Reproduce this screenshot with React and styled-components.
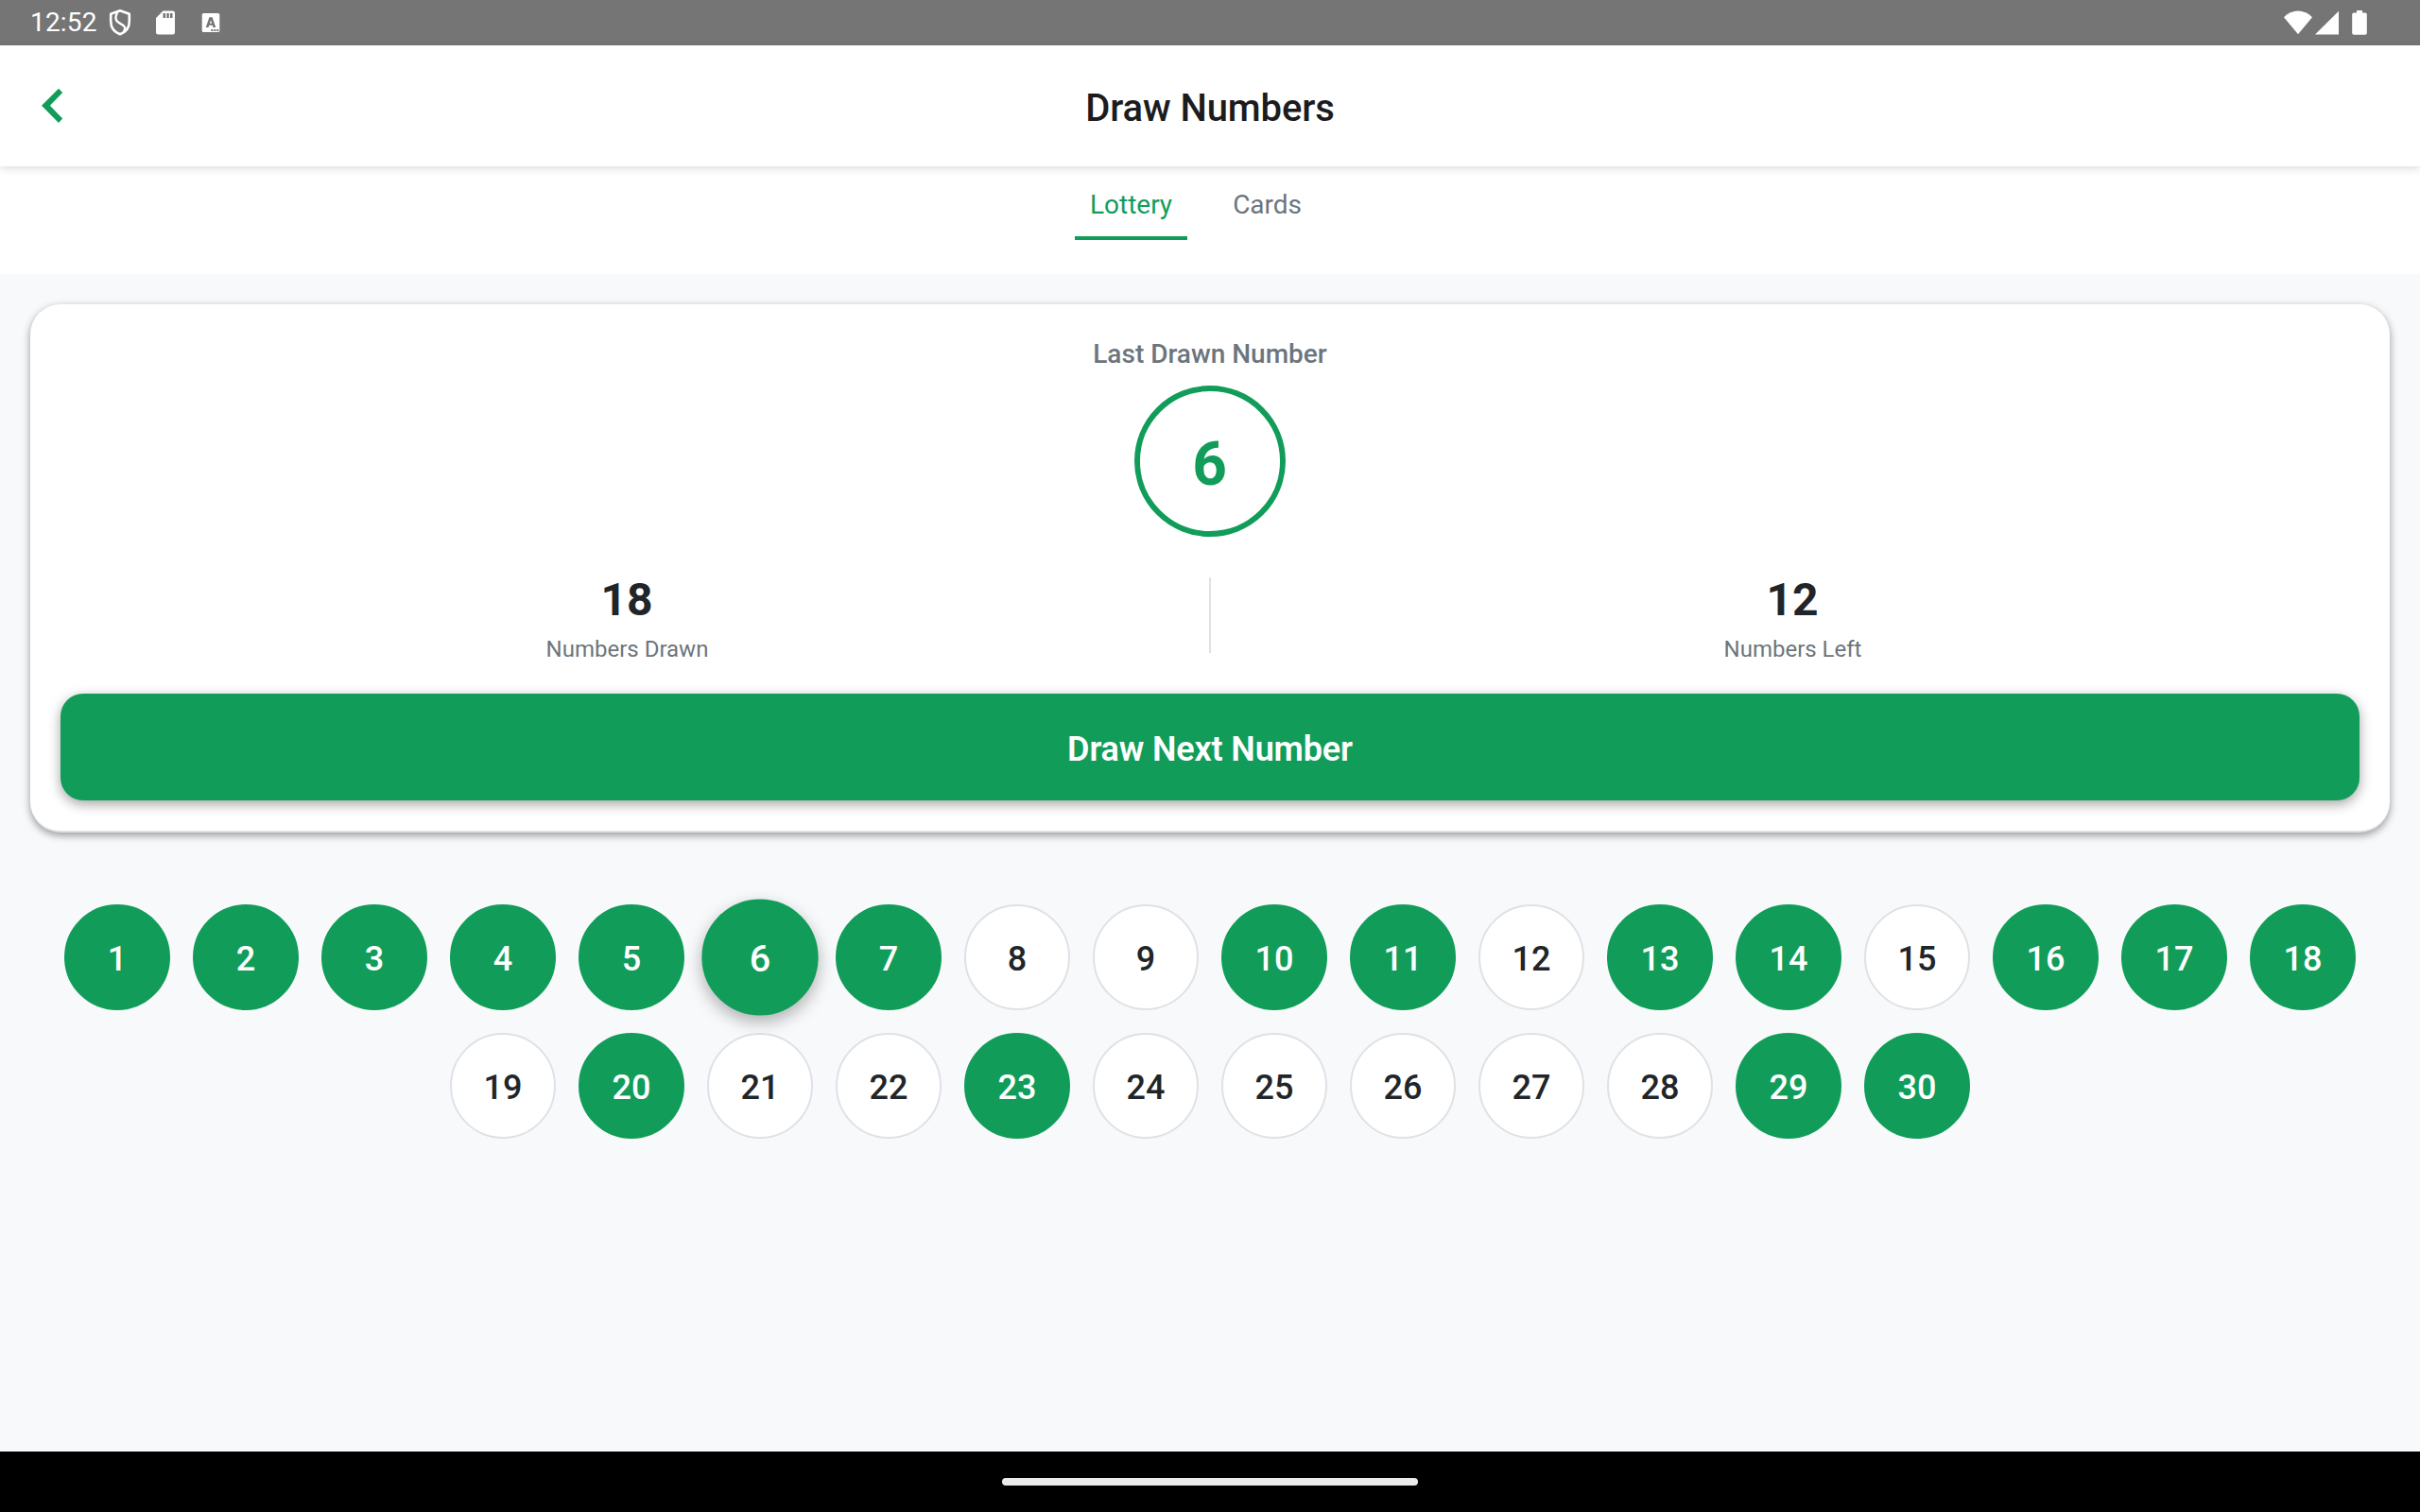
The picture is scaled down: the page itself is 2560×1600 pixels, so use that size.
import React from 'react';
import styled, { createGlobalStyle, css } from 'styled-components';

const GREEN = '#119d59';

const GlobalStyle = createGlobalStyle`
  * { box-sizing: border-box; }
  body { margin: 0; background: #f8f9fb; font-family: Roboto, "Open Sans", sans-serif; }
`;

const Screen = styled.div`
  display: flex;
  flex-direction: column;
  width: 2560px;
  height: 1600px;
  overflow: hidden;
  background: #f8f9fb;
`;

const StatusBar = styled.div`
  display: flex;
  align-items: center;
  justify-content: space-between;
  height: 48px;
  flex: none;
  background: #757575;
  color: #fff;
`;

const StatusGroup = styled.div`
  display: flex;
  align-items: center;
`;

const Clock = styled.span`
  width: 83px;
  margin-left: 32px;
  font-size: 28px;
  line-height: 48px;
  letter-spacing: 0.2px;
`;

const Icon = styled.svg`
  display: block;
  flex: none;
`;

const Header = styled.header`
  display: grid;
  grid-template-columns: 120px 1fr 120px;
  align-items: center;
  height: 128px;
  flex: none;
  background: #fff;
  box-shadow: 0 2px 9px rgba(0, 0, 0, 0.15);
  z-index: 1;
`;

const BackButton = styled.button`
  display: flex;
  width: 120px;
  height: 128px;
  padding: 45px 0 0 43px;
  border: 0;
  background: none;
`;

const Title = styled.h1`
  margin: 0;
  padding-top: 6px;
  text-align: center;
  color: #1c1c1e;
  font-size: 40px;
  font-weight: 500;
  line-height: 48px;
  letter-spacing: -0.1px;
`;

const Tabs = styled.nav`
  display: flex;
  justify-content: center;
  align-items: flex-start;
  height: 114px;
  padding-left: 2px;
  flex: none;
  background: #fff;
`;

const Tab = styled.button`
  height: 78px;
  margin-right: 32px;
  padding: 8px 16px 0;
  border: 0;
  border-bottom: 4px solid ${(p) => (p.$active ? GREEN : 'transparent')};
  background: none;
  color: ${(p) => (p.$active ? GREEN : '#6c757d')};
  font: 400 28px/36px Roboto, sans-serif;
`;

const Card = styled.section`
  display: flex;
  flex-direction: column;
  align-items: center;
  height: 559px;
  margin: 32px 32px 0;
  padding: 32px 32px 0;
  flex: none;
  border-bottom: 2px solid #dee2e6;
  border-radius: 32px;
  background: #fff;
  box-shadow: 0 3px 9px rgba(0, 0, 0, 0.4);
`;

const CardLabel = styled.div`
  height: 54px;
  padding-top: 4px;
  color: #6c757d;
  font-size: 28px;
  font-weight: 500;
  line-height: 34px;
`;

const LastNumber = styled.div`
  display: flex;
  align-items: center;
  justify-content: center;
  width: 160px;
  height: 160px;
  padding: 7px 1px 0 0;
  flex: none;
  border: 6px solid ${GREEN};
  border-radius: 50%;
  color: ${GREEN};
  font-size: 64px;
  font-weight: 700;
`;

const Stats = styled.div`
  display: flex;
  align-items: center;
  width: 100%;
  height: 166px;
`;

const Stat = styled.div`
  flex: 1;
  padding-top: 6px;
  text-align: center;
`;

const StatValue = styled.div`
  padding-right: 1px;
  color: #212529;
  font-size: 48px;
  font-weight: 700;
  line-height: 58px;
`;

const StatLabel = styled.div`
  margin-top: 7px;
  color: #6c757d;
  font-size: 24px;
  line-height: 32px;
`;

const Divider = styled.div`
  width: 2px;
  height: 80px;
  margin: 0 16px;
  background: #dee2e6;
`;

const DrawButton = styled.button`
  width: 100%;
  height: 113px;
  padding: 5px 0 0;
  flex: none;
  border: 0;
  border-radius: 24px;
  background: ${GREEN};
  box-shadow: 0 4px 13px rgba(0, 0, 0, 0.36);
  color: #fff;
  font: 600 36px/44px Roboto, sans-serif;
  letter-spacing: -0.15px;
`;

const Balls = styled.div`
  display: flex;
  flex-wrap: wrap;
  justify-content: center;
  gap: 24px;
  padding: 76px 56px 0;
  flex: 1;
  align-content: flex-start;
`;

const Ball = styled.div`
  display: flex;
  align-items: center;
  justify-content: center;
  width: 112px;
  height: 112px;
  padding-top: 4px;
  border: 2px solid #dee2e6;
  border-radius: 50%;
  background: #fff;
  color: #212529;
  font-size: 36px;
  font-weight: 500;
  ${(p) => p.$drawn && css`
    border-color: ${GREEN};
    background: ${GREEN};
    color: #fff;
  `}
  ${(p) => p.$last && css`
    transform: scale(1.1);
    box-shadow: 0 6px 15px rgba(0, 0, 0, 0.3);
  `}
`;

const NavigationBar = styled.div`
  display: flex;
  align-items: center;
  justify-content: center;
  height: 64px;
  flex: none;
  background: #000;
`;

const HomeHandle = styled.div`
  width: 440px;
  height: 8px;
  border-radius: 4px;
  background: #ebebeb;
`;

const DRAWN = new Set([1, 2, 3, 4, 5, 6, 7, 10, 11, 13, 14, 16, 17, 18, 20, 23, 29, 30]);
const LAST = 6;
const NUMBERS = Array.from({ length: 30 }, (_, i) => i + 1);

const NotificationIcons = () => (
  <Icon width="120" height="48" viewBox="115 0 120 48">
    <path d="M127 11.2 L136.8 14.8 V22.5 C136.8 29 133 34 127 36.3 C121 34 117.2 29 117.2 22.5 V14.8 Z" fill="none" stroke="#fff" strokeWidth="2.6" strokeLinejoin="round" />
    <path d="M124.4 12.5 C120 21 124 23.4 128 25.4 C132.4 27.6 133.6 29.8 130.6 34" fill="none" stroke="#fff" strokeWidth="2.4" />
    <path fillRule="evenodd" fill="#fff" d="M172.5 11.5 H182.5 A2.5 2.5 0 0 1 185 14 V34 A2.5 2.5 0 0 1 182.500 36.500 H167.500 A2.500 2.500 0 0 1 165 34 V19 Z M172.500 14 V19 H175 V14 Z M176.300 14 V19 H178.800 V14 Z M180 14 V19 H182.500 V14 Z" />
    <rect x="213.700" y="14" width="18.600" height="20" rx="1.600" fill="#fff" />
    <path fillRule="evenodd" d="M221.400 18.300 H224.600 L228.200 29 H225.500 L224.800 26.800 H221.200 L220.500 29 H217.800 Z M223 21.200 L221.900 24.700 H224.100 Z" fill="#757575" />
    <path d="M223.300 31 h2 v2 h-2z M226.300 31 h2 v2 h-2z M229.200 31 h2 v2 h-2z" fill="#757575" />
  </Icon>
);

const SystemIcons = () => (
  <Icon width="145" height="48" viewBox="2415 0 145 48" fill="#fff">
    <path d="M2431 36.300 L2416 18.200 C2424.500 9.200 2437.500 9.200 2446 18.200 Z" />
    <path d="M2449 36.600 L2474 11.700 V36.600 Z" />
    <path d="M2493 11 H2499 V13.500 H2502 A1.800 1.800 0 0 1 2503.800 15.300 V35 A1.800 1.800 0 0 1 2502 36.800 H2490 A1.800 1.800 0 0 1 2488.200 35 V15.300 A1.800 1.800 0 0 1 2490 13.500 H2493 Z" />
  </Icon>
);

export default function App() {
  return (
    <>
      <GlobalStyle />
      <Screen>
        <StatusBar>
          <StatusGroup>
            <Clock>12:52</Clock>
            <NotificationIcons />
          </StatusGroup>
          <SystemIcons />
        </StatusBar>
        <Header>
          <BackButton aria-label="Back">
            <Icon width="24" height="38" viewBox="43 93 24 38">
              <path d="M62 93.800 L66.200 98 L52.900 111.800 L66.200 125.600 L62 129.900 L44 111.800 Z" fill={GREEN} />
            </Icon>
          </BackButton>
          <Title>Draw Numbers</Title>
        </Header>
        <Tabs>
          <Tab $active>Lottery</Tab>
          <Tab>Cards</Tab>
        </Tabs>
        <Card>
          <CardLabel>Last Drawn Number</CardLabel>
          <LastNumber>{LAST}</LastNumber>
          <Stats>
            <Stat>
              <StatValue>{DRAWN.size}</StatValue>
              <StatLabel>Numbers Drawn</StatLabel>
            </Stat>
            <Divider />
            <Stat>
              <StatValue>{NUMBERS.length - DRAWN.size}</StatValue>
              <StatLabel>Numbers Left</StatLabel>
            </Stat>
          </Stats>
          <DrawButton>Draw Next Number</DrawButton>
        </Card>
        <Balls>
          {NUMBERS.map((n) => (
            <Ball key={n} $drawn={DRAWN.has(n)} $last={n === LAST}>{n}</Ball>
          ))}
        </Balls>
        <NavigationBar>
          <HomeHandle />
        </NavigationBar>
      </Screen>
    </>
  );
}
